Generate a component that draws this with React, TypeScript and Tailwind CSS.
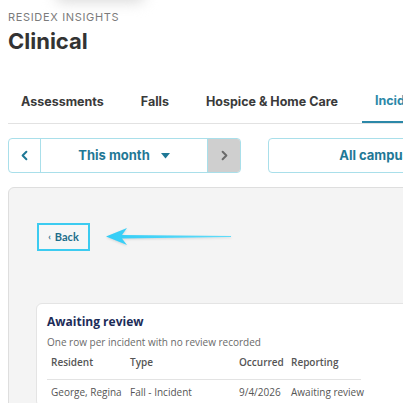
import { ChevronLeft, ChevronRight } from 'lucide-react';

const tabs = ['Assessments', 'Falls', 'Hospice & Home Care', 'Incidents'];

const rows = [
    { resident: 'George, Regina', type: 'Fall - Incident', occurred: '9/4/2026', reporting: 'Awaiting review' },
];

function PeriodPicker() {
    return (
        <div className="flex h-[35px] w-[233px] shrink-0 overflow-hidden rounded-[4px] border border-[#a9dfea] bg-white">
            <button className="flex w-[32px] items-center justify-center border-r border-[#a9dfea] text-[#1f7896]">
                <ChevronLeft size={15} strokeWidth={3.2} />
            </button>
            <button className="flex flex-1 items-center justify-center gap-[11px] text-[13px] font-bold text-[#1f7896]">
                This month
                <svg width="9" height="6" viewBox="0 0 9 6">
                    <path d="M0 0 H9 L4.5 5.5 Z" fill="#1f7896" />
                </svg>
            </button>
            <button className="flex w-[33px] items-center justify-center border-l border-[#a9dfea] bg-[#cfcfcf] text-[#6b6b6b]">
                <ChevronRight size={15} strokeWidth={3.2} />
            </button>
        </div>
    );
}

function PointerArrow() {
    return (
        <svg width="130" height="24" viewBox="0 0 130 24" className="drop-shadow-[0_1px_1px_rgba(0,0,0,0.12)]">
            <defs>
                <linearGradient id="shaft" x1="0" x2="1" y1="0" y2="0">
                    <stop offset="0" stopColor="#33cdf6" />
                    <stop offset="1" stopColor="#5fdcfa" />
                </linearGradient>
            </defs>
            <path d="M1 11.5 L22 3 L17 10 L126 11 L126 12 L17 13.5 L22 20 Z" fill="url(#shaft)" />
        </svg>
    );
}

export default function App() {
    return (
        <div className="relative h-[403px] w-[403px] overflow-hidden bg-white font-['Inter',sans-serif]">
            <div className="absolute left-[55px] top-[-14px] h-[16px] w-[90px] rounded-full bg-[#d9d9d9] blur-[7px]" />

            <div className="relative px-2 pt-[9px]">
                <div className="text-[11px] leading-[16px] tracking-[0.06em] text-[#7b7b7b]">RESIDEX INSIGHTS</div>
                <h1 className="mt-[2px] text-[22px] font-bold leading-[28px] text-[#333]">Clinical</h1>
            </div>

            <div className="ml-2 mt-[27px] flex h-[42px] w-[600px] gap-[11px] border-b border-[#e2e2e2]">
                {tabs.map((tab, i) => (
                    <div
                        key={tab}
                        className={
                            i === 3
                                ? 'flex items-center whitespace-nowrap border-b-2 border-[#2b88a8] px-[13px] text-[12.5px] font-bold text-[#2b88a8]'
                                : 'flex items-center whitespace-nowrap px-[13px] text-[12.5px] font-bold text-[#3a3a3a]'
                        }
                    >
                        {tab}
                    </div>
                ))}
            </div>

            <div className="ml-2 mt-[14px] flex w-[600px] gap-[27px]">
                <PeriodPicker />
                <div className="flex h-[35px] w-[228px] items-center justify-center rounded-[4px] border border-[#a9dfea] bg-white text-[13px] font-bold text-[#1f7896]">
                    All campuses
                </div>
            </div>

            <div className="ml-2 mt-[14px] h-[260px] w-[520px] rounded-[6px] border border-[#dedede] bg-[#f4f4f4] pl-[27px] pt-[35px]">
                <div className="flex items-center gap-[15px]">
                    <button className="ml-[1px] flex h-[28px] w-[53px] items-center justify-center gap-[4px] border-2 border-[#3ccbf0] bg-[#f6f6f6] font-['Lato',sans-serif] text-[11px] font-bold text-[#1d6e8b]">
                        <span className="text-[9px]">‹</span>Back
                    </button>
                    <PointerArrow />
                </div>

                <div className="mt-[52px] w-[460px] rounded-[6px] border border-[#e4e4e4] bg-white px-[10px] pt-[8px] font-['Open_Sans',sans-serif]">
                    <h2 className="text-[12px] font-bold leading-[20px] text-[#1c2c58]">Awaiting review</h2>
                    <p className="mt-[2px] text-[10px] leading-[16px] text-[#6a6a6a]">One row per incident with no review recorded</p>
                    <table className="mt-[1px] w-[314px] table-fixed text-left text-[10px] leading-[15px]">
                        <colgroup>
                            <col className="w-[79px]" />
                            <col className="w-[109px]" />
                            <col className="w-[52px]" />
                            <col />
                        </colgroup>
                        <thead>
                            <tr className="border-b border-[#e3e3e3] text-[#555]">
                                <th className="pb-[9px] pl-[4px] pt-[4px] font-semibold">Resident</th>
                                <th className="pb-[9px] pl-[4px] pt-[4px] font-semibold">Type</th>
                                <th className="pb-[9px] pl-[4px] pt-[4px] font-semibold">Occurred</th>
                                <th className="pb-[9px] pl-[4px] pt-[4px] font-semibold">Reporting</th>
                            </tr>
                        </thead>
                        <tbody>
                            {rows.map((row) => (
                                <tr key={row.resident} className="text-[#555]">
                                    <td className="whitespace-nowrap pb-[6px] pl-[4px] pt-[5px]">{row.resident}</td>
                                    <td className="whitespace-nowrap pb-[6px] pl-[4px] pt-[5px]">{row.type}</td>
                                    <td className="whitespace-nowrap pb-[6px] pl-[4px] pt-[5px]">{row.occurred}</td>
                                    <td className="whitespace-nowrap pb-[6px] pl-[4px] pt-[5px]">{row.reporting}</td>
                                </tr>
                            ))}
                        </tbody>
                    </table>
                </div>
            </div>
        </div>
    );
}
